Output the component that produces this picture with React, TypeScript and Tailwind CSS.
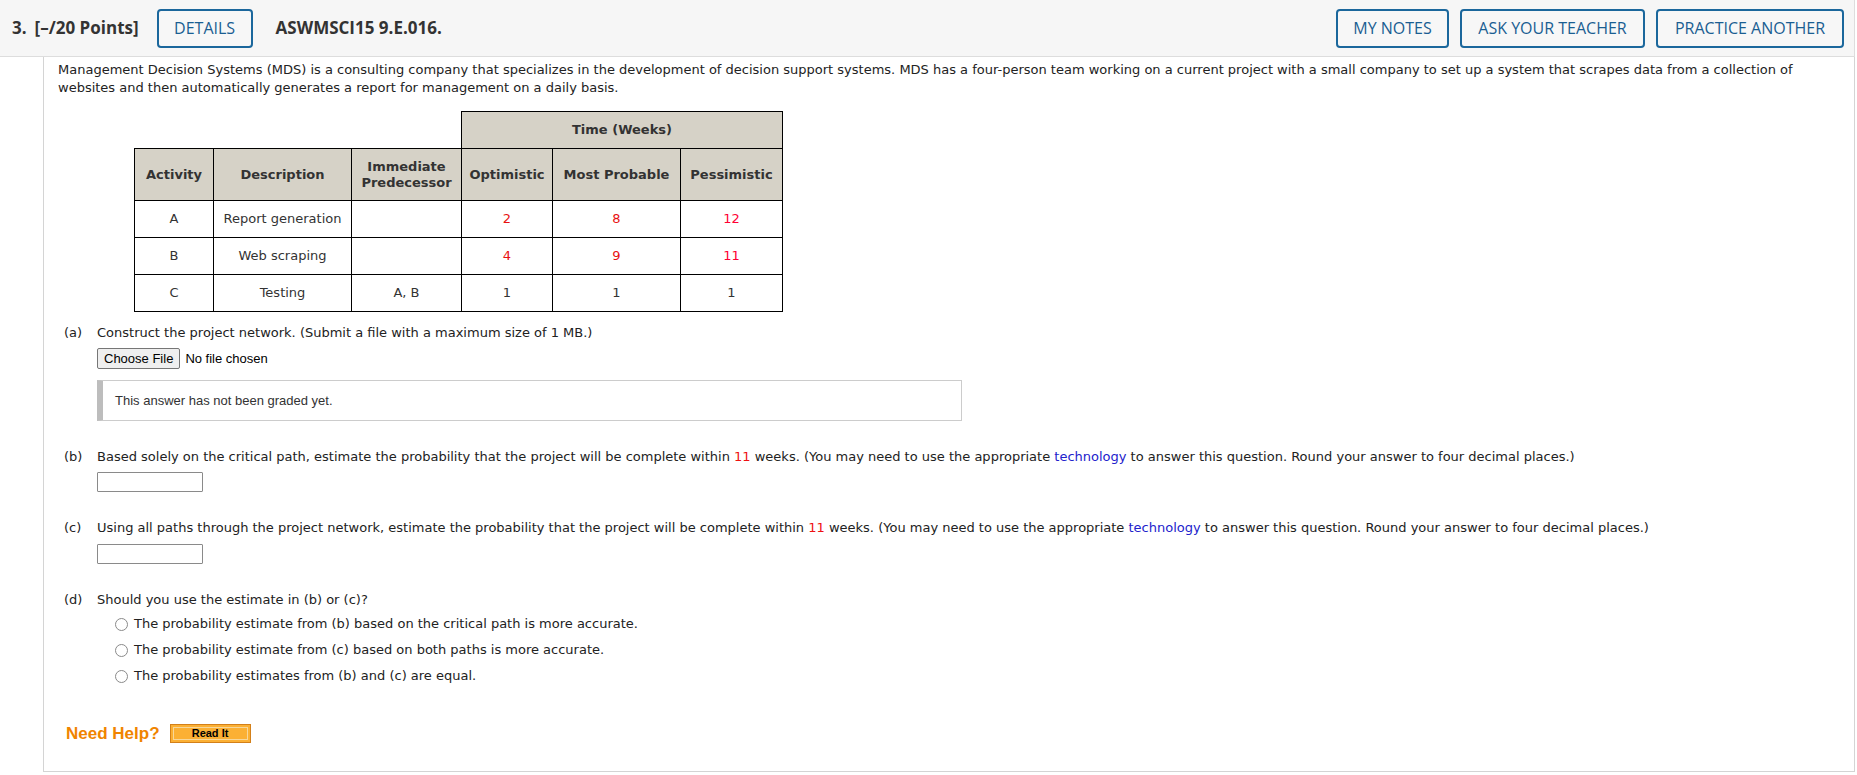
import React from 'react';

const body = "font-['DejaVu_Sans',Verdana,sans-serif] text-[13px] leading-[18px] text-[#222]";

function HeaderButton({ label, width }: { label: string; width: string }) {
  return (
    <button
      className={`${width} h-[39px] rounded-[4px] border-2 border-[#1b679c] bg-[#f7f7f7] text-[16px] text-[#1a5e92] font-['Open_Sans',sans-serif] flex items-center justify-center`}
    >
      {label}
    </button>
  );
}

function Red({ children }: { children: React.ReactNode }) {
  return <span className="text-[#ee1111]">{children}</span>;
}

function Radio({ label }: { label: string }) {
  return (
    <label className="flex items-center h-[26px]">
      <span className="w-[13px] h-[13px] rounded-full border border-[#8a8a8a] bg-white mr-[6px]" />
      <span>{label}</span>
    </label>
  );
}

const rows = [
  { act: 'A', desc: 'Report generation', pred: '', o: '2', m: '8', p: '12', red: true },
  { act: 'B', desc: 'Web scraping', pred: '', o: '4', m: '9', p: '11', red: true },
  { act: 'C', desc: 'Testing', pred: 'A, B', o: '1', m: '1', p: '1', red: false },
];

export default function App() {
  const th = 'border border-black bg-[#d6d2c7] font-bold text-[#333] text-center leading-[16px] px-1';
  const td = 'border border-black text-center text-[#333] h-[37px]';

  return (
    <div className="w-[1855px] h-[775px] bg-white overflow-hidden">
      {/* question header */}
      <div className="h-[57px] bg-[#f6f6f6] border-b border-r border-[#dddddd] flex items-center pl-[12px] pr-[10px] font-['Open_Sans',sans-serif] text-[#333]">
        <span className="text-[17px] font-bold">3.</span>
        <span className="text-[17px] font-bold ml-[8px]">[–/20 Points]</span>
        <div className="ml-[18px]">
          <HeaderButton label="DETAILS" width="w-[96px]" />
        </div>
        <span className="ml-[23px] text-[17px] font-bold">ASWMSCI15 9.E.016.</span>
        <div className="ml-auto flex gap-[11px]">
          <HeaderButton label="MY NOTES" width="w-[113px]" />
          <HeaderButton label="ASK YOUR TEACHER" width="w-[185px]" />
          <HeaderButton label="PRACTICE ANOTHER" width="w-[188px]" />
        </div>
      </div>

      {/* question body */}
      <div className={`ml-[43px] h-[715px] border-l border-r border-b border-[#d4d4d4] pl-[14px] pr-[30px] pt-[4px] ${body}`}>
        <p>
          Management Decision Systems (MDS) is a consulting company that specializes in the development of decision support
          systems. MDS has a four-person team working on a current project with a small company to set up a system that scrapes
          data from a collection of websites and then automatically generates a report for management on a daily basis.
        </p>

        <table className="mt-[14px] ml-[76px] border-collapse">
          <tbody>
            <tr className="h-[37px]">
              <td colSpan={3} />
              <th colSpan={3} className={th}>
                Time (Weeks)
              </th>
            </tr>
            <tr className="h-[52px]">
              <th className={`${th} w-[79px]`}>Activity</th>
              <th className={`${th} w-[138px]`}>Description</th>
              <th className={`${th} w-[110px]`}>
                Immediate
                <br />
                Predecessor
              </th>
              <th className={`${th} w-[91px]`}>Optimistic</th>
              <th className={`${th} w-[128px]`}>Most Probable</th>
              <th className={`${th} w-[102px]`}>Pessimistic</th>
            </tr>
            {rows.map((r) => (
              <tr key={r.act}>
                <td className={td}>{r.act}</td>
                <td className={td}>{r.desc}</td>
                <td className={td}>{r.pred}</td>
                <td className={`${td} ${r.red ? 'text-[#e81010]' : ''}`}>{r.o}</td>
                <td className={`${td} ${r.red ? 'text-[#e81010]' : ''}`}>{r.m}</td>
                <td className={`${td} ${r.red ? 'text-[#ff0033]' : ''}`}>{r.p}</td>
              </tr>
            ))}
          </tbody>
        </table>

        <div className="pl-[6px]">
          {/* (a) */}
          <div className="flex mt-[12px]">
            <span className="w-[33px]">(a)</span>
            <span>Construct the project network. (Submit a file with a maximum size of 1 MB.)</span>
          </div>
          <div className="ml-[33px] mt-[6px] flex items-center font-['Liberation_Sans',Arial,sans-serif] text-[13px] text-black">
            <button className="h-[21px] px-[6px] rounded-[2px] border border-[#767676] bg-[#efefef] leading-none">
              Choose File
            </button>
            <span className="ml-[5px]">No file chosen</span>
          </div>
          <div className="ml-[33px] mt-[11px] w-[865px] h-[41px] border border-[#cccccc] border-l-[6px] border-l-[#bdbdbd] flex items-center pl-[12px] font-['Liberation_Sans',Arial,sans-serif] text-[13px] text-[#333]">
            This answer has not been graded yet.
          </div>

          {/* (b) */}
          <div className="flex mt-[27px]">
            <span className="w-[33px]">(b)</span>
            <span>
              Based solely on the critical path, estimate the probability that the project will be complete within <Red>11</Red>{' '}
              weeks. (You may need to use the appropriate <span className="text-[#2222cc]">technology</span> to answer this
              question. Round your answer to four decimal places.)
            </span>
          </div>
          <input className="block ml-[33px] mt-[6px] w-[106px] h-[20px] border border-[#8a8a8a] rounded-[1px]" />

          {/* (c) */}
          <div className="flex mt-[27px]">
            <span className="w-[33px]">(c)</span>
            <span>
              Using all paths through the project network, estimate the probability that the project will be complete within{' '}
              <Red>11</Red> weeks. (You may need to use the appropriate <span className="text-[#2222cc]">technology</span> to
              answer this question. Round your answer to four decimal places.)
            </span>
          </div>
          <input className="block ml-[33px] mt-[7px] w-[106px] h-[20px] border border-[#8a8a8a] rounded-[1px]" />

          {/* (d) */}
          <div className="flex mt-[27px]">
            <span className="w-[33px]">(d)</span>
            <span>Should you use the estimate in (b) or (c)?</span>
          </div>
          <div className="ml-[51px] mt-[2px]">
            <Radio label="The probability estimate from (b) based on the critical path is more accurate." />
            <Radio label="The probability estimate from (c) based on both paths is more accurate." />
            <Radio label="The probability estimates from (b) and (c) are equal." />
          </div>

          <div className="mt-[35px] ml-[2px] flex items-center font-['Liberation_Sans',Arial,sans-serif]">
            <span className="text-[17px] font-bold text-[#f08400]">Need Help?</span>
            <button className="ml-[10px] w-[81px] h-[19px] bg-[#fbb034] border border-[#d3801a] text-[11px] font-bold text-black leading-none flex items-center justify-center">
              <span className="border border-[#f7d79a] w-[75px] h-[13px] flex items-center justify-center">Read It</span>
            </button>
          </div>
        </div>
      </div>
    </div>
  );
}
